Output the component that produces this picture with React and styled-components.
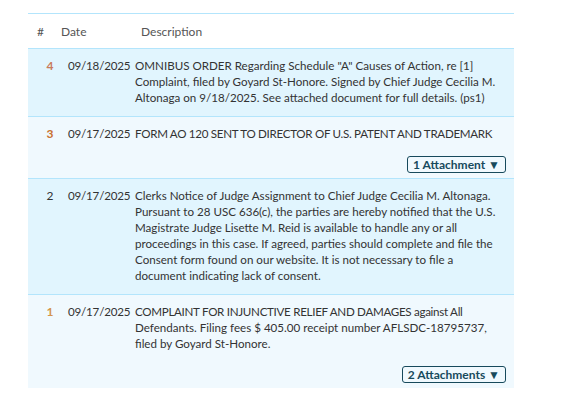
import React from 'react'
import styled, { createGlobalStyle } from 'styled-components'

const GlobalStyle = createGlobalStyle`
  body {
    margin: 0;
    background: #fff;
    font-family: Lato, "Liberation Sans", sans-serif;
    color: #333;
  }
`

const Page = styled.div`
  padding: 13px 70px 0 28px;
  width: 486px;
`

const Table = styled.div`
  border-top: 1px solid #b3e5fc;
`

const HeadRow = styled.div`
  display: grid;
  grid-template-columns: 24px 80px 1fr;
  align-items: center;
  height: 34px;
  padding-left: 9px;
  font-size: 12px;
  color: #555;
`

const Entry = styled.div`
  display: grid;
  grid-template-columns: 12px 79px 1fr;
  padding: 9px 7px ${p => (p.$attached ? '5px' : '10px')} 16px;
  border-top: 1px solid #b3e5fc;
  background: ${p => (p.$tint ? '#e1f5fe' : '#f0f9fe')};
  font-size: 11.6px;
  line-height: 16px;
`

const Num = styled.div`
  text-align: center;
  font-size: 12px;
  font-weight: ${p => (p.$color ? 700 : 400)};
  color: ${p => p.$color || '#333'};
`

const DateCell = styled.div`
  padding-left: 12px;
  letter-spacing: -0.2px;
`

const Desc = styled.div`
  min-width: 0;
`

const Line = styled.div`
  white-space: nowrap;
  letter-spacing: ${p => (p.$caps ? '-0.3px' : 'normal')};
`

const Attach = styled.div`
  display: flex;
  justify-content: flex-end;
  margin-top: 14px;
  margin-right: 1px;
`

const AttachButton = styled.button`
  font-family: inherit;
  font-size: 12px;
  font-weight: 700;
  line-height: 15px;
  height: 17px;
  color: #174a5c;
  background: transparent;
  border: 1px solid #174a5c;
  border-radius: 3px;
  padding: 0 5px;
  cursor: pointer;
`

const entries = [
  {
    num: 4,
    color: '#c97b5b',
    date: '09/18/2025',
    lines: [
      'OMNIBUS ORDER Regarding Schedule "A" Causes of Action, re [1]',
      'Complaint, filed by Goyard St-Honore. Signed by Chief Judge Cecilia M.',
      'Altonaga on 9/18/2025. See attached document for full details. (ps1)',
    ],
  },
  {
    num: 3,
    color: '#c8702e',
    date: '09/17/2025',
    lines: ['FORM AO 120 SENT TO DIRECTOR OF U.S. PATENT AND TRADEMARK'],
    caps: [0],
    attachments: 1,
  },
  {
    num: 2,
    date: '09/17/2025',
    lines: [
      'Clerks Notice of Judge Assignment to Chief Judge Cecilia M. Altonaga.',
      'Pursuant to 28 USC 636(c), the parties are hereby notified that the U.S.',
      'Magistrate Judge Lisette M. Reid is available to handle any or all',
      'proceedings in this case. If agreed, parties should complete and file the',
      'Consent form found on our website. It is not necessary to file a',
      'document indicating lack of consent.',
    ],
  },
  {
    num: 1,
    color: '#d4954c',
    date: '09/17/2025',
    lines: [
      'COMPLAINT FOR INJUNCTIVE RELIEF AND DAMAGES against All',
      'Defendants. Filing fees $ 405.00 receipt number AFLSDC-18795737,',
      'filed by Goyard St-Honore.',
    ],
    caps: [0],
    attachments: 2,
  },
]

export default function App() {
  return (
    <Page>
      <GlobalStyle />
      <Table>
        <HeadRow>
          <span>#</span>
          <span>Date</span>
          <span>Description</span>
        </HeadRow>
        {entries.map((e, i) => (
          <Entry key={e.num} $tint={i % 2 === 0} $attached={!!e.attachments}>
            <Num $color={e.color}>{e.num}</Num>
            <DateCell>{e.date}</DateCell>
            <Desc>
              {e.lines.map((l, j) => (
                <Line key={l} $caps={e.caps && e.caps.includes(j)}>
                  {l}
                </Line>
              ))}
              {e.attachments && (
                <Attach>
                  <AttachButton>
                    {e.attachments} Attachment{e.attachments > 1 ? 's' : ''} ▼
                  </AttachButton>
                </Attach>
              )}
            </Desc>
          </Entry>
        ))}
      </Table>
    </Page>
  )
}
